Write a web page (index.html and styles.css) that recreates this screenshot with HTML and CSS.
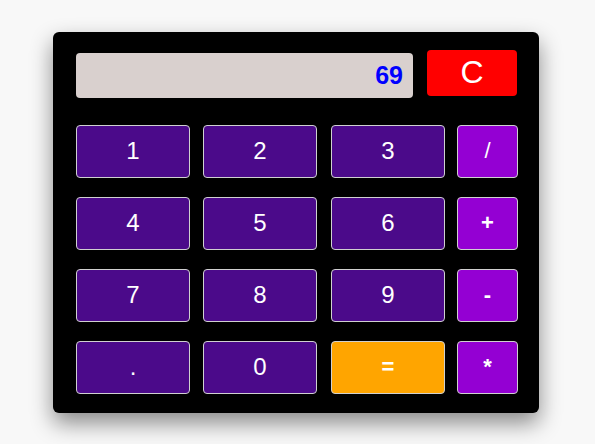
FILE: index.html
```html
<!DOCTYPE html>
<html>
<head>
<meta charset="utf-8">
<link rel="stylesheet" href="styles.css">
</head>
<body>
<div class="calc">
  <div class="top">
    <div class="display">69</div>
    <button class="clear">C</button>
  </div>
  <div class="keys">
    <button class="key">1</button>
    <button class="key">2</button>
    <button class="key">3</button>
    <button class="key op">/</button>
    <button class="key">4</button>
    <button class="key">5</button>
    <button class="key">6</button>
    <button class="key op bold">+</button>
    <button class="key">7</button>
    <button class="key">8</button>
    <button class="key">9</button>
    <button class="key op bold">-</button>
    <button class="key">.</button>
    <button class="key">0</button>
    <button class="key eq bold">=</button>
    <button class="key op bold">*</button>
  </div>
</div>
</body>
</html>
```
FILE: styles.css
```css
html, body {
  margin: 0;
  padding: 0;
}
body {
  background: #f8f8f8;
  width: 595px;
  height: 444px;
  display: flex;
  align-items: center;
  justify-content: center;
  font-family: "Liberation Sans", Arial, sans-serif;
}
.calc {
  box-sizing: border-box;
  width: 486px;
  height: 381px;
  background: #000;
  border-radius: 6px;
  box-shadow: 0 10px 22px rgba(0, 0, 0, 0.45);
  padding: 18px 21px 0 23px;
  margin-left: -3px;
}
.top {
  display: flex;
  align-items: flex-start;
}
.display {
  box-sizing: border-box;
  width: 337px;
  height: 45px;
  margin-top: 3px;
  background: #d9d0ce;
  border-radius: 4px;
  color: #0000ff;
  font-weight: bold;
  font-size: 25px;
  line-height: 45px;
  text-align: right;
  padding-right: 10px;
}
.clear {
  width: 90px;
  height: 46px;
  margin-left: 14px;
  background: #ff0000;
  color: #fff;
  border: none;
  border-radius: 4px;
  font-family: "Liberation Sans", Arial, sans-serif;
  font-size: 32px;
  padding: 0;
}
.keys {
  display: grid;
  grid-template-columns: 127px 128px 126px 61px;
  grid-auto-rows: 53px;
  row-gap: 19px;
  margin-top: 27px;
}
.key {
  box-sizing: border-box;
  width: 114px;
  background: #4b0a8a;
  border: 1px solid #d0d0d0;
  border-radius: 4px;
  color: #fff;
  font-family: "Liberation Sans", Arial, sans-serif;
  font-size: 24px;
  padding: 0;
}
.op {
  width: 61px;
  background: #9400d3;
  font-size: 22px;
}
.eq {
  background: #ffa500;
  font-size: 22px;
}
.bold {
  font-weight: bold;
}
```
